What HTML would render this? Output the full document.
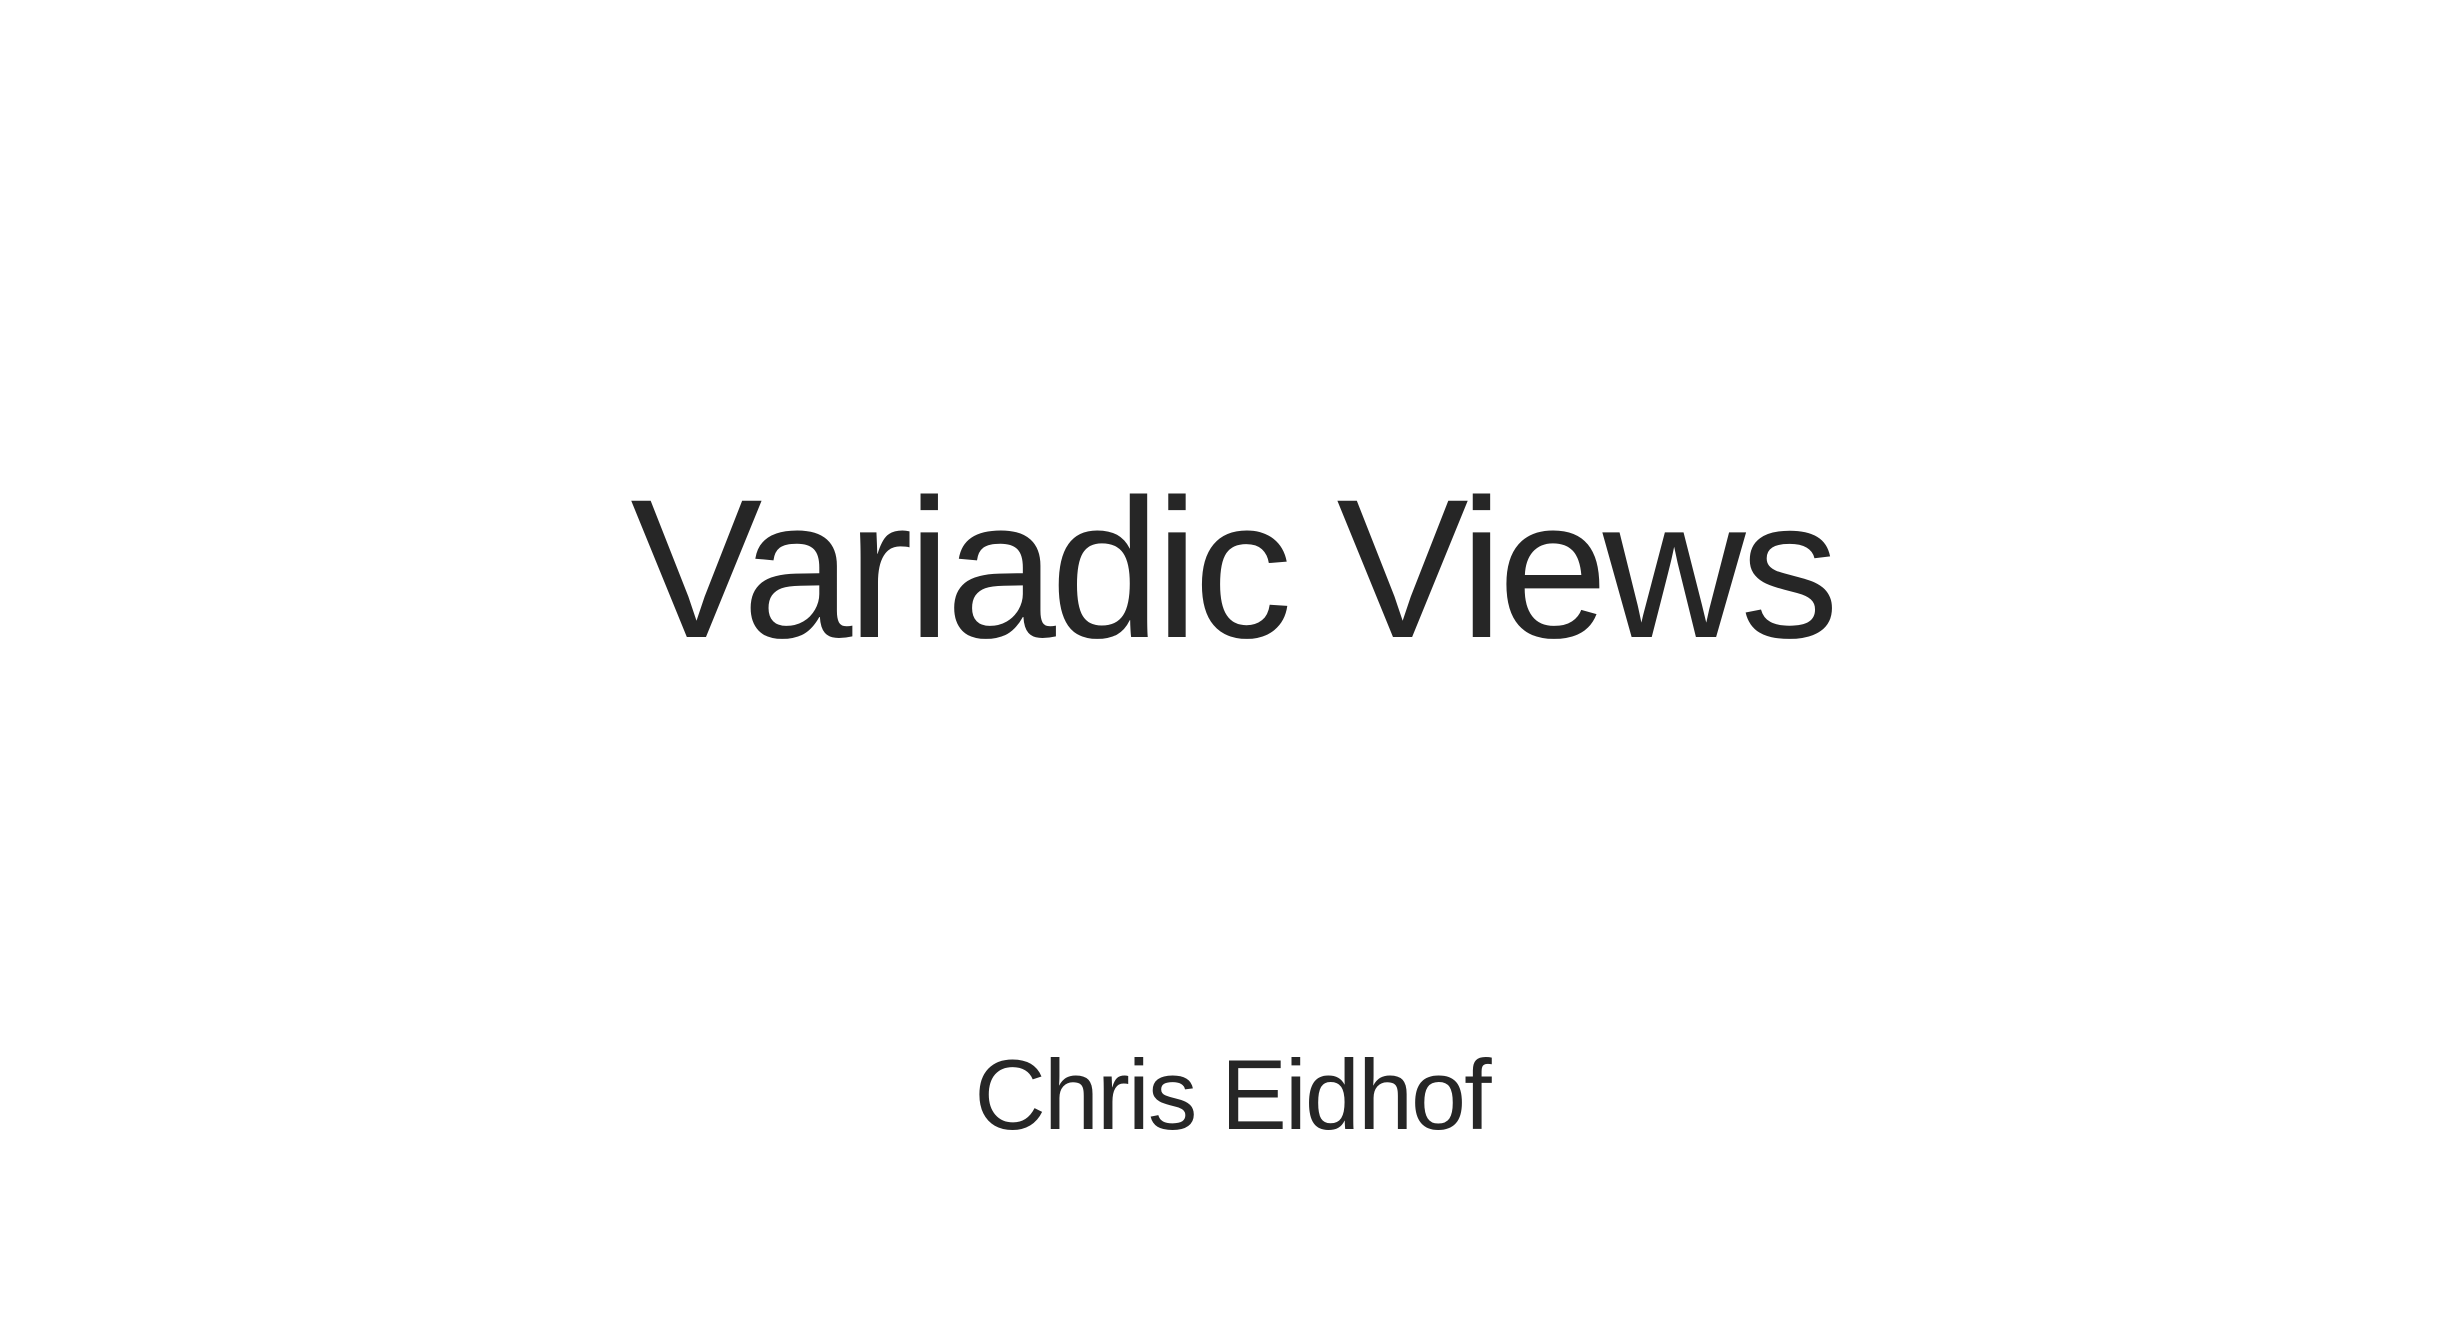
<!DOCTYPE html>
<html><head><meta charset="utf-8"><style>
html,body{margin:0;padding:0;background:#fff;}
body{width:2464px;height:1324px;position:relative;overflow:hidden;font-family:"Liberation Sans",sans-serif;color:#262626;}
.t{position:absolute;left:0;width:2464px;text-align:center;white-space:nowrap;}
#title{top:470px;font-size:198px;line-height:198px;letter-spacing:-5.5px;}
#sub{top:1045px;font-size:99px;line-height:99px;letter-spacing:-2px;}
</style></head><body>
<div class="t" id="title">Variadic Views</div>
<div class="t" id="sub">Chris Eidhof</div>
</body></html>
